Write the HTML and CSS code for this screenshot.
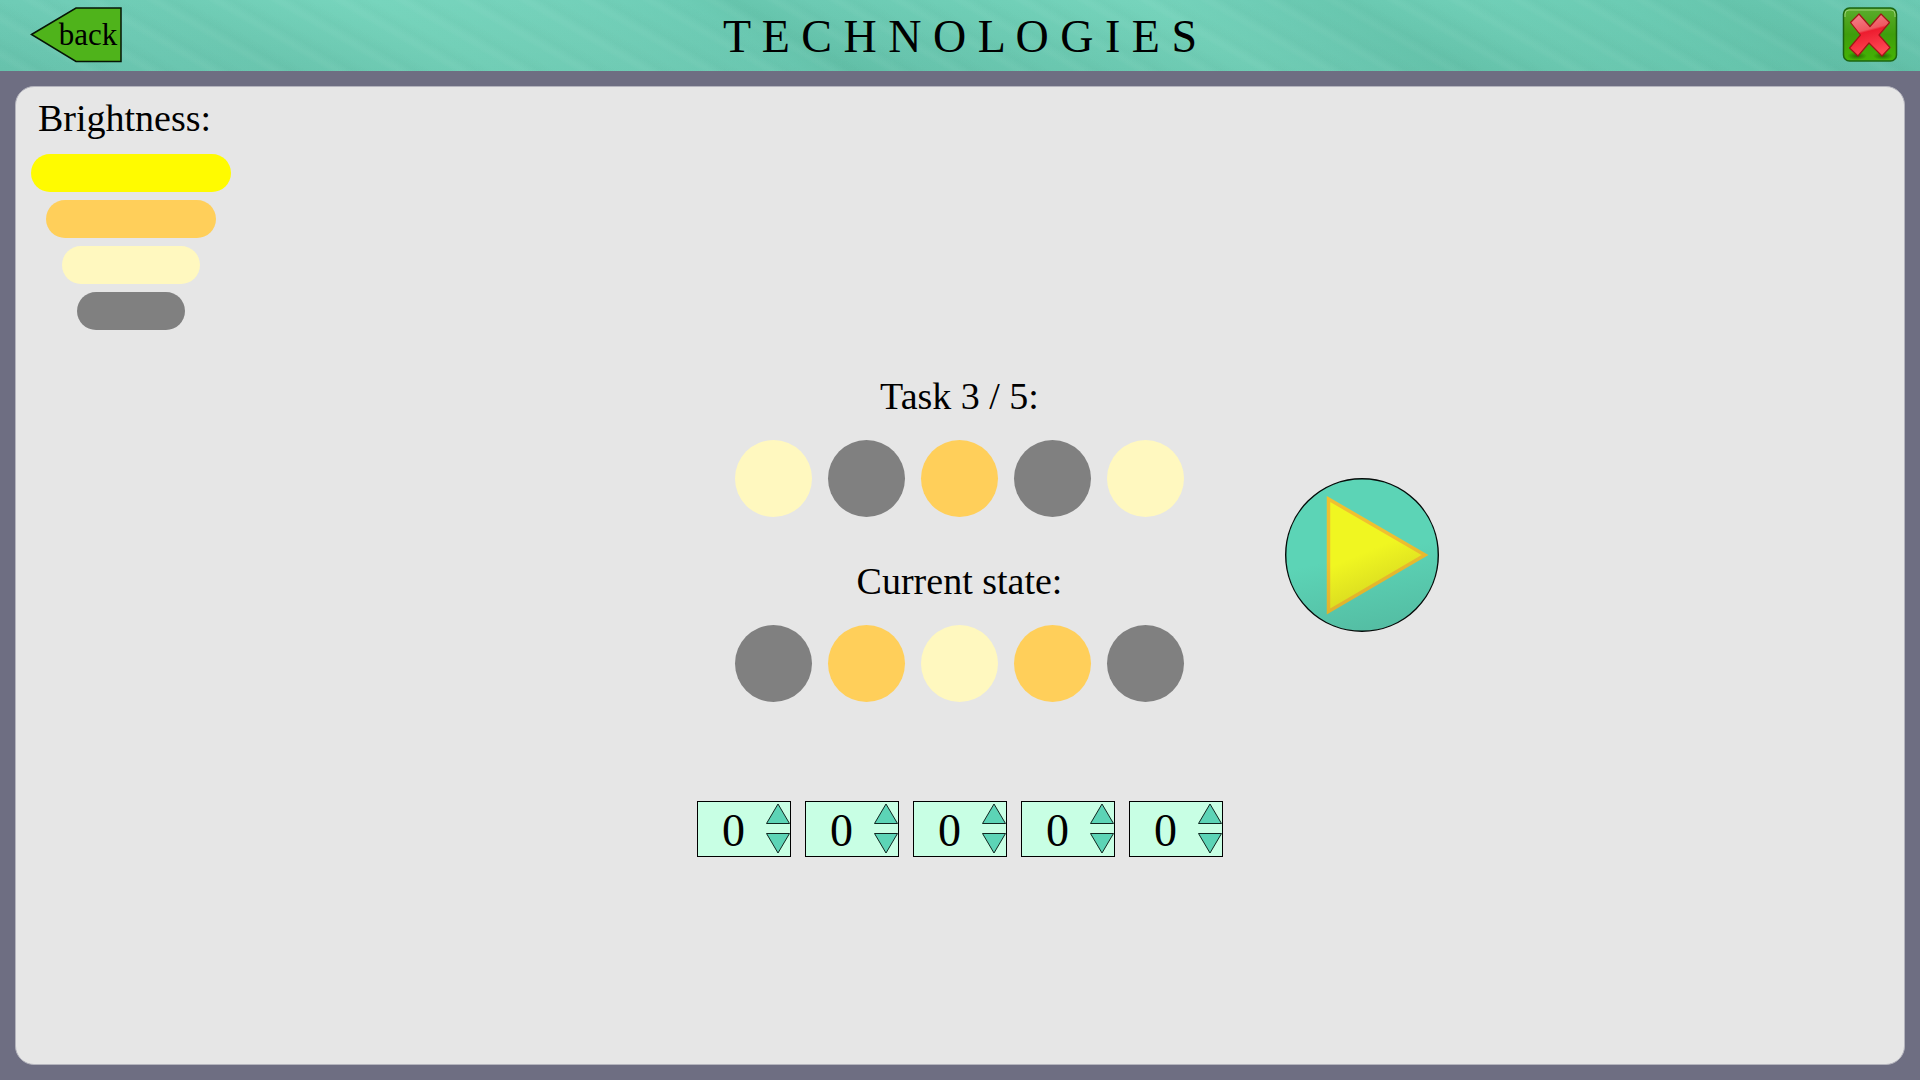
FILE: index.html
```html
<!DOCTYPE html>
<html lang="en">
<head>
<meta charset="utf-8">
<meta name="viewport" content="width=device-width, initial-scale=1">
<title>Technologies</title>
<link rel="stylesheet" href="styles.css">
</head>
<body>
<header class="topbar">
  <button class="back" type="button">
    <svg class="art" viewBox="0 0 92 56" aria-hidden="true"><path d="M1.500 27.500 46 1H91V54.500H46Z" fill="#4fb31b" stroke="#061506" stroke-width="1.500"/></svg>
    <span class="back-text">back</span>
  </button>
  <h1 class="title">T E C H N O L O G I E S</h1>
  <button class="close" type="button" aria-label="Close">
    <svg class="art" viewBox="0 0 56 56" aria-hidden="true">
      <defs>
        <linearGradient id="tile" x1="0" y1="0" x2="0" y2="1"><stop offset="0" stop-color="#5cac2d"/><stop offset=".5" stop-color="#3e9d0c"/><stop offset="1" stop-color="#45b404"/></linearGradient>
        <linearGradient id="cross" x1="0" y1="0" x2=".25" y2="1"><stop offset="0" stop-color="#f28790"/><stop offset=".45" stop-color="#ef5961"/><stop offset=".5" stop-color="#ed1c2f"/><stop offset="1" stop-color="#ff4653"/></linearGradient>
        <radialGradient id="shade"><stop offset="0" stop-color="#174f00" stop-opacity=".7"/><stop offset="1" stop-color="#174f00" stop-opacity="0"/></radialGradient>
      </defs>
      <rect x="1.500" y="1" width="53" height="53" rx="6" fill="url(#tile)" stroke="#1c6510" stroke-width="1.500"/>
      <path d="M3 10V7Q3 3 7 3H49Q53 3 53 7V10" fill="none" stroke="#9bd178" stroke-width="1"/>
      <ellipse cx="15" cy="49" rx="10" ry="4" fill="url(#shade)"/>
      <ellipse cx="41" cy="49" rx="10" ry="4" fill="url(#shade)"/>
      <path d="M17 7 28 19.500 39 7 47.500 15.500 37 28 48 40.500 40 49 27 36 16 49 7.500 41 18.500 28 8.500 15.500Z" fill="url(#cross)" stroke="#a01517" stroke-width="1.200" stroke-linejoin="round"/>
    </svg>
  </button>
</header>
<main class="panel">
  <section class="legend">
    <h2 class="label">Brightness:</h2>
    <div class="bar bar-4 yellow"></div>
    <div class="bar bar-3 orange"></div>
    <div class="bar bar-2 cream"></div>
    <div class="bar bar-1 gray"></div>
  </section>
  <div class="board">
    <section class="state">
      <h2 class="label">Task 3 / 5:</h2>
      <div class="lamps"><i class="lamp cream"></i><i class="lamp gray"></i><i class="lamp orange"></i><i class="lamp gray"></i><i class="lamp cream"></i></div>
    </section>
    <section class="state">
      <h2 class="label">Current state:</h2>
      <div class="lamps"><i class="lamp gray"></i><i class="lamp orange"></i><i class="lamp cream"></i><i class="lamp orange"></i><i class="lamp gray"></i></div>
    </section>
    <form class="steppers">
      <svg class="symbols" aria-hidden="true"><symbol id="tri" viewBox="0 0 24 21"><path d="M12 1 23.500 20.500H.500Z" fill="#5cd4b6" stroke="#10251f" stroke-width="1"/></symbol></svg>
      <div class="stepper">
        <input class="value" type="text" inputmode="numeric" value="0" aria-label="Lamp 1">
        <div class="arrows"><button class="arrow" type="button" aria-label="Increase lamp 1"><svg class="art"><use href="#tri"/></svg></button><button class="arrow down" type="button" aria-label="Decrease lamp 1"><svg class="art"><use href="#tri"/></svg></button></div>
      </div>
      <div class="stepper">
        <input class="value" type="text" inputmode="numeric" value="0" aria-label="Lamp 2">
        <div class="arrows"><button class="arrow" type="button" aria-label="Increase lamp 2"><svg class="art"><use href="#tri"/></svg></button><button class="arrow down" type="button" aria-label="Decrease lamp 2"><svg class="art"><use href="#tri"/></svg></button></div>
      </div>
      <div class="stepper">
        <input class="value" type="text" inputmode="numeric" value="0" aria-label="Lamp 3">
        <div class="arrows"><button class="arrow" type="button" aria-label="Increase lamp 3"><svg class="art"><use href="#tri"/></svg></button><button class="arrow down" type="button" aria-label="Decrease lamp 3"><svg class="art"><use href="#tri"/></svg></button></div>
      </div>
      <div class="stepper">
        <input class="value" type="text" inputmode="numeric" value="0" aria-label="Lamp 4">
        <div class="arrows"><button class="arrow" type="button" aria-label="Increase lamp 4"><svg class="art"><use href="#tri"/></svg></button><button class="arrow down" type="button" aria-label="Decrease lamp 4"><svg class="art"><use href="#tri"/></svg></button></div>
      </div>
      <div class="stepper">
        <input class="value" type="text" inputmode="numeric" value="0" aria-label="Lamp 5">
        <div class="arrows"><button class="arrow" type="button" aria-label="Increase lamp 5"><svg class="art"><use href="#tri"/></svg></button><button class="arrow down" type="button" aria-label="Decrease lamp 5"><svg class="art"><use href="#tri"/></svg></button></div>
      </div>
    </form>
  </div>
  <button class="play" type="button" aria-label="Run">
    <svg class="art" viewBox="0 0 154 154" aria-hidden="true">
      <defs>
        <linearGradient id="disc" x1=".4" y1="0" x2=".6" y2="1"><stop offset=".5" stop-color="#5cd4b6"/><stop offset="1" stop-color="#54bda3"/></linearGradient>
        <linearGradient id="fill" gradientUnits="userSpaceOnUse" x1="70" y1="60" x2="92" y2="112"><stop offset=".3" stop-color="#f0f621"/><stop offset="1" stop-color="#dcde20"/></linearGradient>
        <linearGradient id="edge" x1="0" y1="0" x2=".3" y2="1"><stop offset=".5" stop-color="#f0c030"/><stop offset="1" stop-color="#deb02b"/></linearGradient>
      </defs>
      <circle cx="77" cy="77" r="76.300" fill="url(#disc)" stroke="#050b09" stroke-width="1.400"/>
      <path d="M43.500 21 140 77 43.500 133.500Z" fill="url(#fill)" stroke="url(#edge)" stroke-width="3.500"/>
    </svg>
  </button>
</main>
</body>
</html>
```
FILE: styles.css
```css
* { box-sizing: border-box; }

body {
  margin: 0;
  min-height: 100vh;
  display: flex;
  flex-direction: column;
  background: #6e6e82;
  color: #000;
  font-family: "Liberation Serif", "Times New Roman", serif;
}

button {
  padding: 0;
  border: 0;
  background: none;
  color: inherit;
  font: inherit;
  cursor: pointer;
}

h1, h2 { margin: 0; font-weight: 400; }

.art { display: block; width: 100%; height: 100%; }
.symbols { display: none; }

.topbar {
  display: grid;
  grid-template-columns: 1fr auto 1fr;
  align-items: start;
  padding: 7px 22px 8px;
  background:
    repeating-linear-gradient(30deg, rgba(255, 255, 255, 0) 0 9px, rgba(255, 255, 255, 0.03) 13px 15px, rgba(0, 60, 40, 0.02) 22px, rgba(255, 255, 255, 0) 31px),
    linear-gradient(rgba(0, 60, 40, 0), rgba(0, 60, 40, 0.05)),
    linear-gradient(30deg, #6cc9b3 0%, #70cdb7 9%, #6fccb5 14%, #77d5bd 24%, #75d2bb 32%, #6ecdb6 39%, #67c6ae 42%, #6ccab3 45%, #70cfb7 54%, #76d4bc 62%, #6fcdb6 67%, #69c8b0 71%, #70cfb7 78%, #6cccb4 85%, #66c5ad 91%, #6ccbb4 100%);
}

.back {
  display: grid;
  width: 92px;
  height: 56px;
  margin-left: 8px;
  font-size: 31px;
}
.back > * { grid-area: 1 / 1; }
.back-text { align-self: center; padding-left: 24px; line-height: 36px; }

.title { padding-top: 3px; font-size: 46px; line-height: 53px; }

.close { justify-self: end; width: 56px; height: 56px; }

.panel {
  flex: 1;
  display: grid;
  grid-template-columns: 1fr auto 1fr;
  align-items: start;
  margin: 15px;
  padding: 8px 16px 8px 15px;
  border: 1px solid #b4b4bd;
  border-radius: 19px;
  background: #e6e6e6;
}

.label { font-size: 38px; line-height: 46px; text-align: center; }

.legend {
  justify-self: start;
  display: flex;
  flex-direction: column;
  align-items: center;
  gap: 8px;
  width: 200px;
}
.legend .label { align-self: flex-start; padding: 0 0 5px 7px; }
.bar { height: 38px; border-radius: 19px; }
.bar-4 { width: 200px; }
.bar-3 { width: 170px; }
.bar-2 { width: 138px; }
.bar-1 { width: 108px; }

.yellow { background: #fffb00; }
.orange { background: #ffcf5a; }
.cream { background: #fff8bf; }
.gray { background: #808080; }

.board {
  display: flex;
  flex-direction: column;
  align-items: center;
  gap: 41px;
  padding-top: 278px;
}
.state { display: flex; flex-direction: column; gap: 21px; }
.lamps { display: flex; gap: 16px; }
.lamp { width: 77px; height: 77px; border-radius: 50%; }

.steppers { display: flex; gap: 14px; padding-top: 58px; }
.stepper {
  display: flex;
  width: 94px;
  height: 56px;
  border: 1px solid #000;
  background: #c8ffe4;
}
.value {
  width: 68px;
  padding: 4px 0 0 4px;
  border: 0;
  background: none;
  color: #000;
  font: 46px/50px "Liberation Serif", "Times New Roman", serif;
  text-align: center;
}
.arrows {
  display: flex;
  flex-direction: column;
  justify-content: space-between;
  padding: 1px 0 2px;
}
.arrow { width: 24px; height: 21px; }
.down { transform: rotate(180deg); }

.play {
  width: 154px;
  height: 154px;
  margin: 383px 0 0 62px;
}
```
